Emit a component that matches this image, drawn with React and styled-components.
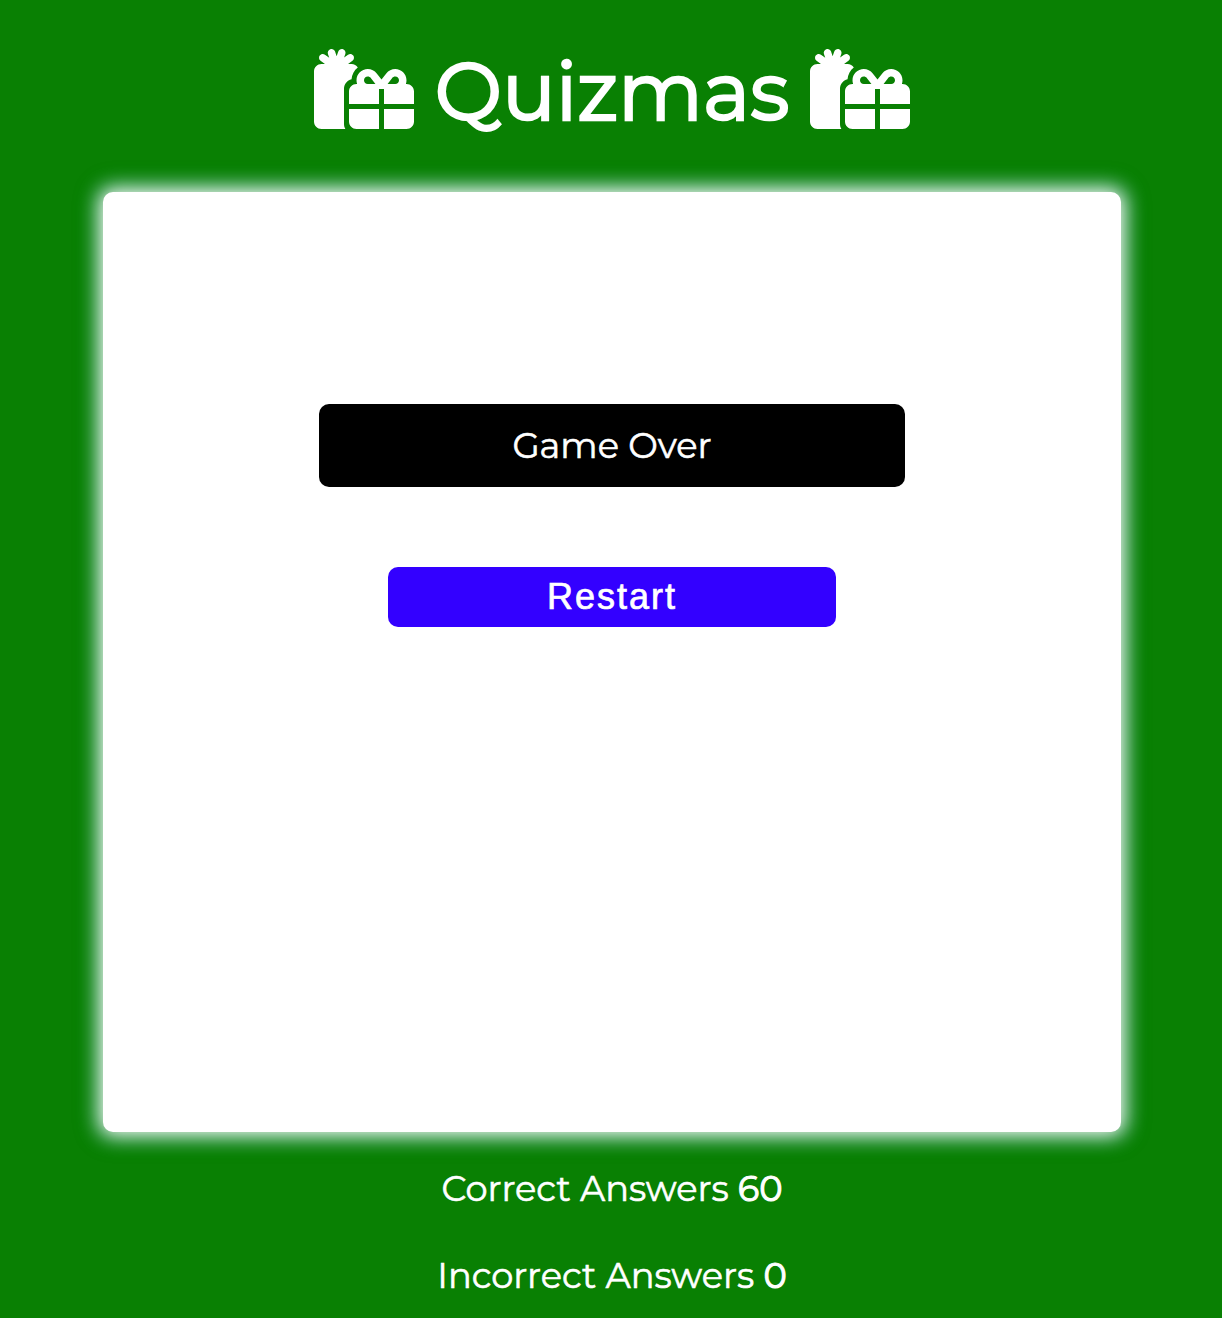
import React from "react";
import styled, { createGlobalStyle } from "styled-components";
import { FaGifts } from "react-icons/fa6";

const GlobalStyle = createGlobalStyle`
  *, *::before, *::after { box-sizing: border-box; }
  body {
    margin: 0;
    background: #098003;
    color: #fff;
    font-family: Montserrat, Lato, "Liberation Sans", sans-serif;
  }
`;

const Page = styled.div`
  display: flex;
  flex-direction: column;
  align-items: center;
  min-height: 1318px;
  padding-left: 2px;
`;

const Header = styled.header`
  display: flex;
  align-items: center;
  justify-content: space-between;
  width: 596.5px;
  height: 192px;
  padding-bottom: 14px;
`;

const GiftIcon = styled(FaGifts)`
  flex: none;
  width: 100px;
  height: 100px;
`;

const Title = styled.h1`
  display: flex;
  justify-content: center;
  flex: 1;
  margin: 0;
  padding-top: 5px;
  font-size: 80px;
  font-weight: 400;
  line-height: 98px;
  -webkit-text-stroke: 2.5px #fff;
`;

const Card = styled.main`
  display: flex;
  flex-direction: column;
  align-items: center;
  width: 1018px;
  height: 940px;
  padding-top: 212px;
  border-radius: 10px;
  background: #fff;
  box-shadow: 0 0 20px 4px #fff, 0 0 20px 10px rgba(0, 140, 90, 0.4);
`;

const Message = styled.div`
  display: flex;
  align-items: center;
  justify-content: center;
  width: 586px;
  height: 83px;
  border-radius: 10px;
  background: #000;
`;

const Label = styled.span`
  font-size: 35.2px;
  font-weight: 400;
  line-height: 43px;
  -webkit-text-stroke: 0.6px #fff;
`;

const Count = styled.span`
  -webkit-text-stroke: 1px #fff;
`;

const RestartButton = styled.button`
  width: 448px;
  height: 60px;
  margin-top: 80px;
  padding: 0;
  border: 0;
  border-radius: 10px;
  background: #30f;
  color: #fff;
  font: 400 36px/60px "Liberation Sans", Arial, sans-serif;
  letter-spacing: 2px;
  -webkit-text-stroke: 0.7px #fff;
`;

const Scores = styled.footer`
  display: flex;
  flex-direction: column;
  align-items: center;
  gap: 44px;
  padding-top: 35px;
`;

export default function App() {
  return (
    <>
      <GlobalStyle />
      <Page>
        <Header>
          <GiftIcon />
          <Title>Quizmas</Title>
          <GiftIcon />
        </Header>
        <Card>
          <Message>
            <Label>Game Over</Label>
          </Message>
          <RestartButton type="button">Restart</RestartButton>
        </Card>
        <Scores>
          <Label>Correct Answers <Count>60</Count></Label>
          <Label>Incorrect Answers <Count>0</Count></Label>
        </Scores>
      </Page>
    </>
  );
}
